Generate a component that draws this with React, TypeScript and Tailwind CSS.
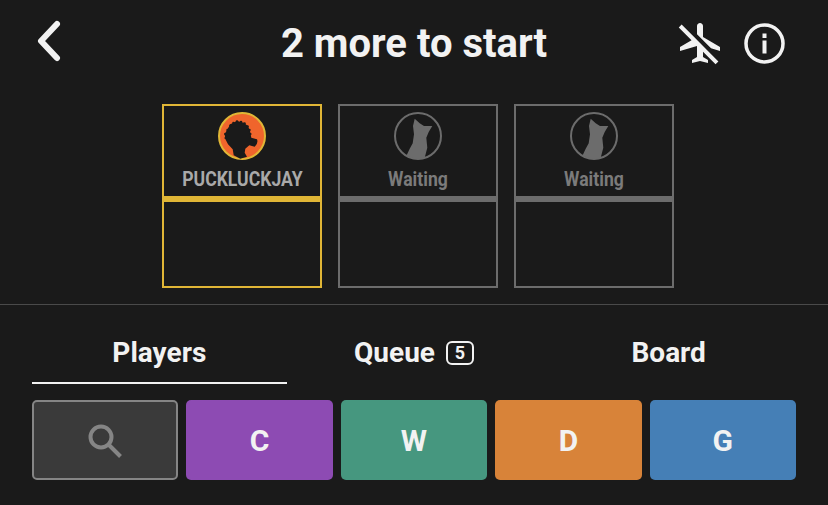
import { MdAirplanemodeInactive } from "react-icons/md";

const filters = [
  { label: "C", color: "bg-[#8d4bb3]" },
  { label: "W", color: "bg-[#46977f]" },
  { label: "D", color: "bg-[#d88339]" },
  { label: "G", color: "bg-[#457fb6]" },
];

// bumps along the hair line
const curls = [
  [8.5, 27, 1.1], [8.3, 23, 1.2], [10.5, 19, 1.2], [13.5, 14.5, 1.3], [16.5, 12, 1.3],
  [20, 10.5, 1.3], [24, 11, 1.3], [27.5, 12.5, 1.3], [30.5, 15.5, 1.3], [32.5, 19, 1.2], [33.5, 23, 1.1],
];

function PlayerAvatar() {
  return (
    <svg width="50" height="50" viewBox="0 0 50 50">
      <circle cx="25" cy="25" r="23" fill="#f0652c" stroke="#e0b636" strokeWidth="2" />
      <path
        d="M8.300 28L7.700 23.300 10 19 13.300 13.300 20 10 26.700 11.700 31 15 33.300 21 34.300 26.700 40 28.300Q41.500 32 37.700 35.700L32.300 34.300 28.300 37.700 27.700 41.700 30 45.700 23.300 47.700 16.700 44.300 15.700 38.300 11 33.300z"
        fill="#1a1a1a"
      />
      {curls.map(([cx, cy, r]) => (
        <circle key={`${cx}-${cy}`} cx={cx} cy={cy} r={r} fill="#1a1a1a" />
      ))}
    </svg>
  );
}

function WaitingAvatar() {
  return (
    <svg width="50" height="50" viewBox="0 0 50 50">
      <circle cx="25" cy="25" r="23" fill="none" stroke="#6c6c6c" strokeWidth="2" />
      <path
        d="M21.700 7.700L26.700 12.300 31 15 39.300 15 35.700 21 33.300 26.700 34.300 36.700 31.700 46.700 23.300 48 13.300 45 16.700 37.700 19.700 32.300 21 23.300 20 15z"
        fill="#6c6c6c"
      />
    </svg>
  );
}

function SeatCard({ name, active }: { name: string; active?: boolean }) {
  return (
    <div
      className={`flex h-[184px] w-[160px] flex-col border-2 ${
        active ? "border-[#e0b636]" : "border-[#6c6c6c]"
      }`}
    >
      <div className="flex h-[90px] flex-col items-center pt-[5px]">
        {active ? <PlayerAvatar /> : <WaitingAvatar />}
        <span
          className={`mt-[5px] scale-x-[0.88] text-[20px] leading-[26px] font-bold ${
            active ? "text-[#a9a9a9]" : "text-[#7b7b7b]"
          }`}
        >
          {name}
        </span>
      </div>
      <div className={`h-[6px] ${active ? "bg-[#e0b636]" : "bg-[#6c6c6c]"}`} />
    </div>
  );
}

export default function App() {
  return (
    <div className="flex h-[505px] w-[828px] flex-col overflow-hidden bg-[#1a1a1a] font-['Roboto',sans-serif] text-[#f2f2f2]">
      {/* header */}
      <div className="grid h-[88px] grid-cols-[1fr_auto_1fr] items-center px-[43px]">
        <svg width="26" height="42" viewBox="0 0 26 42" fill="none" className="-mt-[6px] -ml-[7px]">
          <path d="M21 4L5 21l16 17" stroke="#f2f2f2" strokeWidth="6" strokeLinecap="round" strokeLinejoin="round" />
        </svg>
        <h1 className="text-[40px] leading-none font-bold">2 more to start</h1>
        <div className="-mt-[2px] flex items-center justify-end gap-[20px]">
          <MdAirplanemodeInactive size={48} />
          <svg width="41" height="41" viewBox="0 0 41 41" fill="none">
            <circle cx="20.500" cy="20.500" r="18.500" stroke="#f2f2f2" strokeWidth="3.500" />
            <rect x="18.500" y="17.500" width="4" height="13" fill="#f2f2f2" />
            <rect x="18.500" y="10.500" width="4" height="4.500" fill="#f2f2f2" />
          </svg>
        </div>
      </div>

      {/* seats */}
      <div className="mt-[16px] ml-[8px] flex justify-center gap-[16px]">
        <SeatCard name="PUCKLUCKJAY" active />
        <SeatCard name="Waiting" />
        <SeatCard name="Waiting" />
      </div>

      <div className="mt-[16px] h-px bg-[#4a4a4a]" />

      {/* tabs */}
      <div className="mx-[32px] mt-[16px] grid h-[63px] grid-cols-3 text-[28px] font-bold">
        <div className="flex items-center justify-center border-b-2 border-[#f2f2f2] pt-[2px]">Players</div>
        <div className="flex items-center justify-center gap-[11px]">
          Queue
          <span className="flex h-[24px] w-[28px] items-center justify-center rounded-[6px] border-2 border-[#f2f2f2] text-[18px] leading-none">
            5
          </span>
        </div>
        <div className="flex items-center justify-center">Board</div>
      </div>

      {/* filters */}
      <div className="mx-[32px] mt-[16px] grid h-[80px] grid-cols-5 gap-[8px]">
        <div className="flex items-center justify-center rounded-[5px] border-2 border-[#858585] bg-[#3a3a3a]">
          <svg width="38" height="38" viewBox="0 0 38 38" fill="none" className="mt-[1px] mr-[1px]">
            <circle cx="15" cy="15" r="10.500" stroke="#858585" strokeWidth="4" />
            <path d="M23 23l11.500 11.500" stroke="#858585" strokeWidth="4" />
          </svg>
        </div>
        {filters.map((f) => (
          <div
            key={f.label}
            className={`flex items-center justify-center rounded-[5px] text-[30px] font-bold text-[#f2f2f2] ${f.color}`}
          >
            {f.label}
          </div>
        ))}
      </div>
    </div>
  );
}
